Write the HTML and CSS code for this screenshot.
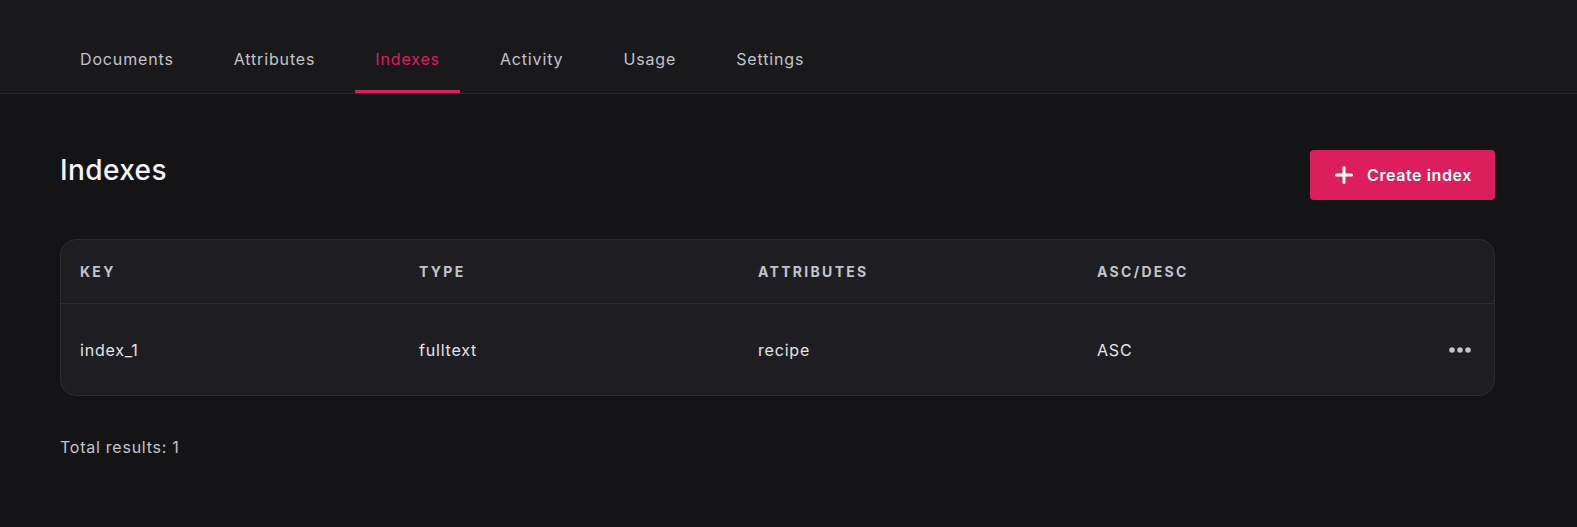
FILE: index.html
```html
<!DOCTYPE html>
<html lang="en">
<head>
<meta charset="utf-8">
<title>Indexes</title>
<link rel="stylesheet" href="styles.css">
</head>
<body>
<header class="topbar">
  <nav class="tabs">
    <a class="tab">Documents</a>
    <a class="tab">Attributes</a>
    <a class="tab active">Indexes</a>
    <a class="tab">Activity</a>
    <a class="tab">Usage</a>
    <a class="tab">Settings</a>
  </nav>
</header>
<main class="content">
  <div class="title-row">
    <h1 class="title">Indexes</h1>
    <button class="btn-primary">
      <svg class="plus" width="18" height="18" viewBox="0 0 18 18" aria-hidden="true"><path d="M9 1.5v15M1.5 9h15" stroke="#fff" stroke-width="3" stroke-linecap="round"/></svg>
      <span>Create index</span>
    </button>
  </div>
  <div class="table">
    <div class="row head">
      <div class="cell">KEY</div>
      <div class="cell">TYPE</div>
      <div class="cell">ATTRIBUTES</div>
      <div class="cell">ASC/DESC</div>
      <div class="cell act"></div>
    </div>
    <div class="row body">
      <div class="cell">index_1</div>
      <div class="cell">fulltext</div>
      <div class="cell">recipe</div>
      <div class="cell">ASC</div>
      <div class="cell act">
        <svg width="22" height="6" viewBox="0 0 22 6" aria-hidden="true"><circle cx="3" cy="3" r="2.8" fill="#c3c3cb"/><circle cx="11" cy="3" r="2.8" fill="#c3c3cb"/><circle cx="19" cy="3" r="2.8" fill="#c3c3cb"/></svg>
      </div>
    </div>
  </div>
  <p class="total">Total results: 1</p>
</main>
</body>
</html>
```

FILE: styles.css
```css
* { box-sizing: border-box; }
html, body { margin: 0; padding: 0; }
body {
  background: #141417;
  color: #e4e4e7;
  font-family: Inter, "Noto Sans", sans-serif;
  height: 527px;
  overflow: hidden;
}
.topbar {
  background: #19191c;
  height: 94px;
  border-bottom: 1px solid #2b2b30;
  padding-left: 60px;
}
.tabs {
  display: flex;
  gap: 20px;
}
.tab {
  display: block;
  padding: 47px 20px 19px;
  font-size: 16px;
  line-height: 24px;
  letter-spacing: 0.85px;
  color: #c3c3cb;
  border-bottom: 3px solid transparent;
  cursor: pointer;
}
.tab.active {
  color: #dc1e5c;
  border-bottom-color: #dc1e5c;
}
.content {
  padding: 56px 82px 0 60px;
}
.title-row {
  display: flex;
  justify-content: space-between;
  align-items: flex-start;
}
.title {
  margin: 0;
  font-size: 28px;
  line-height: 40px;
  font-weight: 500;
  color: #f4f4f6;
  letter-spacing: 0.4px;
}
.btn-primary {
  display: flex;
  align-items: center;
  gap: 14px;
  height: 50px;
  padding: 0 23px 0 25px;
  background: #dc1e5c;
  border: none;
  border-radius: 4px;
  color: #fff;
  font-family: inherit;
  font-size: 16px;
  font-weight: 600;
  letter-spacing: 0.6px;
  cursor: pointer;
}
.plus { display: block; }
.table {
  margin-top: 39px;
  background: #1e1e22;
  border: 1px solid #2b2b30;
  border-radius: 16px;
  overflow: hidden;
}
.row {
  display: grid;
  grid-template-columns: 339px 339px 339px 339px 1fr;
  padding-left: 19px;
  align-items: center;
}
.row.head {
  height: 64px;
  border-bottom: 1px solid #2b2b30;
}
.row.body {
  height: 91px;
}
.head .cell {
  font-size: 14px;
  font-weight: 700;
  letter-spacing: 2.3px;
  color: #c3c3cb;
}
.body .cell {
  font-size: 16px;
  letter-spacing: 0.8px;
  color: #e4e4e7;
}
.cell.act {
  display: flex;
  justify-content: flex-end;
  padding-right: 23px;
}
.cell.act svg { display: block; }
.total {
  margin: 39px 0 0;
  font-size: 16px;
  line-height: 24px;
  letter-spacing: 0.75px;
  color: #c3c3cb;
}
```
